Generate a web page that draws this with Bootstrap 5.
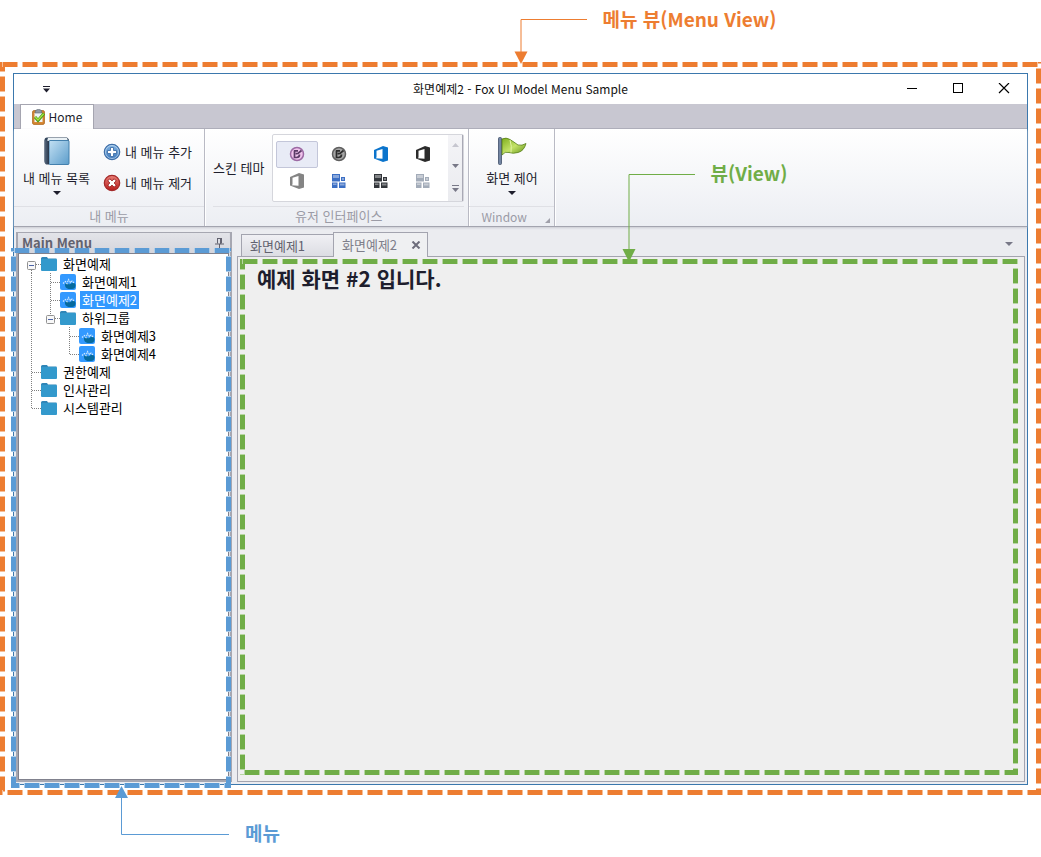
<!DOCTYPE html>
<html lang="ko">
<head>
<meta charset="utf-8">
<meta name="viewport" content="width=device-width, initial-scale=1">
<title>Fox UI Model Menu Sample</title>
<link href="https://cdn.jsdelivr.net/npm/bootstrap@5.3.0/dist/css/bootstrap.min.css" rel="stylesheet">
<style>
  body { font-family: "Noto Sans CJK KR", sans-serif; font-size: 13px; line-height: 18px; color: #1e1e2d; background: #fff; }
  button { font: inherit; color: inherit; border: 0; background: none; padding: 0; }
  svg { display: block; flex: none; }
  .page { min-height: 100vh; padding: 62px 0; }
  .frame { padding: 11px 13px 10px; }
  .latin { font-size: 12px; }

  /* dashed marker frames */
  .dash-frame { position: absolute; inset: 0; pointer-events: none; z-index: 3;
    --h: linear-gradient(90deg, var(--soft) 1px, var(--c) 1px 15px, var(--soft) 15px 16px, transparent 16px);
    --v: linear-gradient(var(--soft) 1px, var(--c) 1px 15px, var(--soft) 15px 16px, transparent 16px);
    background: var(--h) var(--t) 0 / 20px 5px repeat-x, var(--h) var(--b) 100% / 20px 5px repeat-x,
                var(--v) 0 var(--l) / 5px 20px repeat-y, var(--v) 100% var(--r) / 5px 20px repeat-y; }
  .dash-orange { --c: #ed7d31; --soft: #f6be98; --t: 2px; --b: 7px; --l: 14px; --r: 6px; }
  .dash-blue { --c: #5b9bd5; --soft: #adcdea; --t: 3px; --b: 13px; --l: 8px; --r: 8px; inset: 15px -1px -8px -7px; }
  .dash-green { --c: #70ad47; --soft: #b7d6a3; --t: 2px; --b: 4px; --l: 15px; --r: 9px; inset: 2px 6px 6px 2px; }
  .callout { position: absolute; z-index: 4; font-size: 19px; line-height: 24px; font-weight: 700; white-space: nowrap; }
  .callout-orange { color: #ed7d31; top: 7px; left: calc(50% - 7px); }
  .callout-green { color: #70ad47; top: 161px; left: calc(60% - 3px); }
  .callout-blue { color: #5b9bd5; bottom: 12px; left: 115px; }

  .win { border: 1px solid #3b78ad; background: #ebecf0; }
  .titlebar { height: 30px; background: #fff; color: #111; }
  .quick { position: absolute; left: 28px; }
  .win-btns { position: absolute; right: 17px; gap: 34px; }
  .strip { height: 25px; background: #c8c7d1; border-bottom: 1px solid #adadb8; padding-left: 6px; }
  .ribbon-tab { height: 25px; width: 74px; background: #fff; border: 1px solid #a5a5b0; border-bottom: 0; gap: 3px; }
  .ribbon { height: 98px; background: linear-gradient(#fff, #eceef3); border-bottom: 1px solid #a3a4af; box-shadow: 0 1px 2px #c9cad2; position: relative; }
  .group { border-right: 1px solid #b9bac4; box-shadow: 1px 0 #fff; }
  .group-mine { width: 191px; }
  .group-body { height: 77px; }
  .group-cap { height: 20px; color: #9b9ba6; border-top: 1px solid #dfe0e5; }
  .big-btn { width: 85px; }
  .mini-btns { padding: 14px 0 0 4px; gap: 13px; }
  .caret { width: 0; height: 0; border: 4px solid transparent; border-top-color: #1e1e2d; border-bottom: 0; }
  .caret.dim { border-top-color: #787887; }
  .gallery { width: 192px; height: 68px; background: #fff; border: 1px solid #d5d6dc; border-radius: 2px; padding-left: 3px; }
  .swatches { display: grid; grid-template-columns: repeat(4, 42px); grid-template-rows: 27px 27px; align-content: center; }
  .swatches button { display: flex; align-items: center; justify-content: center; border: 1px solid transparent; border-radius: 2px; }
  .swatches button.on { background: #e8ebf6; border-color: #c3c6d9; }
  .scroller { width: 15px; background: linear-gradient(#f4f4f7, #eaebef); border-right: 1px solid #a9a9b5; }

  .work { padding: 5px 2px 2px; gap: 5px; }
  .side { width: 216px; border: 2px solid #a6a7b1; border-top-width: 1px; background: #dcdde3; padding: 0 1px 0 0; }
  .side-head { height: 20px; color: #62626f; background: linear-gradient(#e3e4e9, #d4d5dc); padding: 0 5px 0 4px; }
  .tree { background: #fff; border: 1px solid #80818d; color: #000; padding: 1px 0 0 3px; margin: 0; }
  .tree li { height: 18px; display: flex; align-items: center; }
  .tree span { margin-left: 4px; padding: 0 2px; line-height: 18px; }
  .tree .sel { background: #3399ff; color: #fff; }
  .tabs { height: 24px; padding-left: 4px; }
  .doc-tab { height: 22px; width: 92px; background: linear-gradient(#f0f0f4, #dcdde3); border: 1px solid #a3a4af; border-width: 1px 0 0 1px; color: #62626f; padding: 0 8px; }
  .doc-tab.on { height: 25px; width: 95px; background: #eff0f2; border-right-width: 1px; color: #7e7e8a; margin-bottom: -1px; position: relative; z-index: 1; padding-right: 6px; }
  .view { background: #efefef; border: 1px solid #a3a4af; padding: 6px 19px; }
  .view h1 { font-size: 21px; line-height: 30px; font-weight: 700; margin: 0; }
</style>
</head>
<body>
<svg width="0" height="0" class="position-absolute" aria-hidden="true">
  <defs>
    <linearGradient id="gBook" x2="1" y2="1"><stop stop-color="#c3e0f3"/><stop offset="1" stop-color="#5c9dcb"/></linearGradient>
    <linearGradient id="gSpine" x2="1"><stop stop-color="#5b6b80"/><stop offset="1" stop-color="#26364b"/></linearGradient>
    <linearGradient id="gFlag" x2="1" y2="1"><stop stop-color="#7fae1e"/><stop offset=".5" stop-color="#c3e267"/><stop offset="1" stop-color="#5b8c14"/></linearGradient>
    <linearGradient id="gBlue" y2="1" x2="0"><stop stop-color="#86b8e6"/><stop offset="1" stop-color="#3873b8"/></linearGradient>
    <linearGradient id="gRed" y2="1" x2="0"><stop stop-color="#ea8078"/><stop offset="1" stop-color="#b81c1c"/></linearGradient>
    <symbol id="folder" viewBox="0 0 16 16"><path d="M0 2.500Q0 1 1.500 1H6l1 1.500H15.500V4H0Z" fill="#2f86b8"/><rect y="3" width="16" height="12" rx="1" fill="#3399cc"/></symbol>
    <symbol id="form" viewBox="0 0 16 16"><rect width="16" height="16" rx="2" fill="#3399ff"/><path d="M5 10Q7 8.500 9 10.500L13 8.500Q16 9.500 15.500 12 15 15 12 15H8.500Q4.500 14 5 10Z" fill="#066a9e"/><path d="M3 9.500L5.500 7.500L7 9.500L8.500 5.500L10.500 8.500L12 7L14 9" fill="none" stroke="#cfe8ff" stroke-width="1.200" stroke-dasharray="1.600 .8"/></symbol>
    <symbol id="pipe" viewBox="0 0 19 18"><path d="M9.500 0V18" stroke="#808080" stroke-dasharray="1"/></symbol>
    <symbol id="tee" viewBox="0 0 19 18"><path d="M9.500 0V18M10 9.500H19" stroke="#808080" stroke-dasharray="1"/></symbol>
    <symbol id="elbow" viewBox="0 0 19 18"><path d="M9.500 0V10M10 9.500H19" stroke="#808080" stroke-dasharray="1"/></symbol>
    <symbol id="minus" viewBox="0 0 19 18"><path d="M14 9.500H19" stroke="#808080" stroke-dasharray="1"/><rect x="5.500" y="6.500" width="8" height="8" rx="1" fill="#f8f8f8" stroke="#919191"/><path d="M7 10.500H12" stroke="#4b63a7"/></symbol>
    <symbol id="office" viewBox="0 0 16 16"><path fill-rule="evenodd" d="M1 4L10 0L15 1.500V14.500L10 16L1 12.500ZM3.500 4.800V11.500L2.500 12.200L9.500 12.800V3Z" fill="currentColor"/></symbol>
    <symbol id="tiles" viewBox="0 0 14 14"><path d="M0 0H8V7.500H0ZM9 3H13V7H9ZM0 8.500H5.500V14H0ZM7 8.500H13.500V14H7Z" fill="currentColor"/><path d="M1 1H7V4H1ZM10 4H12V6H10ZM1 9.500H4.500V11H1ZM8 9.500H12.500V11.500H8Z" fill="#fff" opacity=".4"/></symbol>
    <symbol id="disc" viewBox="0 0 16 16"><circle cx="8" cy="8" r="6.500" fill="var(--f)" stroke="currentColor" stroke-width="1.500"/><path d="M5.500 4.500V11.500H7.500Q10.500 11.500 10.500 8.500M5 4.800H9M7.500 8.500V7.500H9L12.500 4.500" fill="none" stroke="var(--k)" stroke-width="1.700"/></symbol>
  </defs>
</svg>

<main class="page d-flex flex-column position-relative">
  <div class="callout callout-orange d-flex">
    <svg class="me-3" width="73" height="57" viewBox="0 0 73 57"><path d="M7 46V12.500H73" fill="none" stroke="#ed7d31"/><path d="M.5 44.500H13.500L7 57Z" fill="#ed7d31"/></svg>
    <div>메뉴 뷰(Menu View)</div>
  </div>
  <div class="callout callout-green d-flex">
    <svg class="me-3" width="73" height="101" viewBox="0 0 73 101"><path d="M7 90V13.500H73" fill="none" stroke="#70ad47"/><path d="M.5 88H13.500L7 101Z" fill="#70ad47"/></svg>
    <div>뷰(View)</div>
  </div>
  <div class="callout callout-blue d-flex align-items-end">
    <svg class="me-3" width="114" height="59" viewBox="0 0 114 59"><path d="M6.500 10V48.500H114" fill="none" stroke="#5b9bd5"/><path d="M0 12H13L6.500 0Z" fill="#5b9bd5"/></svg>
    <div>메뉴</div>
  </div>

  <div class="frame position-relative flex-grow-1 d-flex flex-column">
    <div class="dash-frame dash-orange"></div>
    <section class="win flex-grow-1 d-flex flex-column">
      <header class="titlebar d-flex align-items-center justify-content-center position-relative">
        <button class="quick" aria-label="빠른 실행"><svg width="9" height="7"><path d="M1 .5H8" stroke="#1e1e2d"/><path d="M1 2.500H8L4.500 6.500Z" fill="#1e1e2d"/></svg></button>
        <div class="latin">화면예제2 - Fox UI Model Menu Sample</div>
        <div class="win-btns d-flex">
          <button aria-label="최소화"><svg width="12" height="12"><path d="M1 5.500H11" stroke="#000"/></svg></button>
          <button aria-label="최대화"><svg width="12" height="12"><rect x="1.500" y=".5" width="9" height="9" fill="none" stroke="#000"/></svg></button>
          <button aria-label="닫기"><svg width="12" height="12"><path d="M1 0L11 10M11 0L1 10" stroke="#000" stroke-width="1.200"/></svg></button>
        </div>
      </header>
      <nav class="strip">
        <button class="ribbon-tab latin d-flex align-items-center justify-content-center">
          <svg width="14" height="16" viewBox="0 0 14 16"><rect x=".7" y="1.700" width="11.600" height="13.600" rx="1" fill="#d98a35" stroke="#b06a20"/><path d="M2.500 4H10.500V13H2.500Z" fill="#eef3f6"/><path d="M3.500 1.500Q6.500-1 9.500 1.500L10 4H3Z" fill="#9199a3" stroke="#5d6672" stroke-width=".6"/><path d="M3 8L6 11.500 12 4.500" fill="none" stroke="#4c9a12" stroke-width="3"/><path d="M3.200 8L6 11 11.700 4.700" fill="none" stroke="#a5e445" stroke-width="1.300"/></svg>
          Home
        </button>
      </nav>
      <div class="ribbon d-flex">
        <div class="group group-mine">
          <div class="group-body d-flex">
            <button class="big-btn d-flex flex-column align-items-center pt-2">
              <svg width="26" height="28" viewBox="0 0 26 28"><path d="M3 .5H23l2 2V27H3Q.5 27 .5 24V3Q.5.5 3 .5Z" fill="#33465c"/><path d="M4 1H23L24 4H3Z" fill="#eaf1f5"/><rect x="5" y="3.500" width="20" height="24" rx="1" fill="url(#gBook)" stroke="#4480ad"/><path d="M.5 3L5 4V27.500H2Q.5 27 .5 24Z" fill="url(#gSpine)"/></svg>
              <span class="pt-1">내 메뉴 목록</span><span class="caret mt-1"></span>
            </button>
            <div class="mini-btns d-flex flex-column">
              <button class="d-flex align-items-center gap-1">
                <svg width="18" height="18" viewBox="0 0 18 18"><circle cx="9" cy="9" r="7.700" fill="url(#gBlue)" stroke="#3f6fa8" stroke-width="1.200"/><circle cx="9" cy="9" r="6.500" fill="none" stroke="#c9def1" stroke-width=".7"/><path d="M7.500 4.500h3v3h3v3h-3v3h-3v-3h-3v-3h3Z" fill="#fff" stroke="#3565a0" stroke-width=".8"/></svg>
                내 메뉴 추가
              </button>
              <button class="d-flex align-items-center gap-1">
                <svg width="18" height="18" viewBox="0 0 18 18"><circle cx="9" cy="9" r="7.700" fill="url(#gRed)" stroke="#a32a2a" stroke-width="1.200"/><path d="M7.500 4.500h3v3h3v3h-3v3h-3v-3h-3v-3h3Z" transform="rotate(45 9 9)" fill="#fff" stroke="#8f1414" stroke-width=".8"/></svg>
                내 메뉴 제거
              </button>
            </div>
          </div>
          <div class="group-cap text-center">내 메뉴</div>
        </div>
        <div class="group ps-2 pe-1">
          <div class="group-body d-flex align-items-center gap-2">
            <span>스킨 테마</span>
            <div class="gallery d-flex justify-content-between">
              <div class="swatches">
                <button class="on" aria-label="스킨 1"><svg width="16" height="16" style="--f:#f0c3ec;--k:#5a3a66" color="#9c6aa4"><use href="#disc"/></svg></button>
                <button aria-label="스킨 2"><svg width="16" height="16" style="--f:#a5a5a5;--k:#2c2c2c" color="#5f5f5f"><use href="#disc"/></svg></button>
                <button aria-label="스킨 3"><svg width="16" height="16" color="#0b74cc"><use href="#office"/></svg></button>
                <button aria-label="스킨 4"><svg width="16" height="16" color="#2b2b2b"><use href="#office"/></svg></button>
                <button aria-label="스킨 5"><svg width="16" height="16" color="#848484"><use href="#office"/></svg></button>
                <button aria-label="스킨 6"><svg width="14" height="14" color="#3c6fc4"><use href="#tiles"/></svg></button>
                <button aria-label="스킨 7"><svg width="14" height="14" color="#33363b"><use href="#tiles"/></svg></button>
                <button aria-label="스킨 8"><svg width="14" height="14" color="#a3acb9"><use href="#tiles"/></svg></button>
              </div>
              <div class="scroller d-flex flex-column align-items-center justify-content-around">
                <button aria-label="위로"><svg width="7" height="4"><path d="M0 4H7L3.500 0Z" fill="#c6c6cf"/></svg></button>
                <button aria-label="아래로"><svg width="7" height="4"><path d="M0 0H7L3.500 4Z" fill="#787887"/></svg></button>
                <button aria-label="펼치기"><svg width="7" height="7"><path d="M0 .5H7" stroke="#787887"/><path d="M0 3H7L3.500 7Z" fill="#787887"/></svg></button>
              </div>
            </div>
          </div>
          <div class="group-cap text-center">유저 인터페이스</div>
        </div>
        <div class="group">
          <div class="group-body">
            <button class="big-btn d-flex flex-column align-items-center pt-2">
              <svg width="30" height="28" viewBox="0 0 30 28"><rect x="1.500" y=".5" width="3" height="27" rx="1" fill="#7385a3" stroke="#3f4e68" stroke-width=".8"/><path d="M5 2Q9 0 13 2.500T21 8Q25 9 29 6.500 27 14 21 15.500 16 17 12 15.500T5 18Z" fill="url(#gFlag)" stroke="#567f17" stroke-width=".8"/><path d="M13 3Q15 9 14 15.500" stroke="#e2f3a4" fill="none"/></svg>
              <span class="pt-1">화면 제어</span><span class="caret mt-1"></span>
            </button>
          </div>
          <div class="group-cap latin d-flex justify-content-between align-items-center ps-2 pe-1"><span class="ps-1">Window</span><svg class="mt-2" width="5" height="5"><path d="M5 0V5H0Z" fill="#a0a0aa"/></svg></div>
        </div>
      </div>

      <div class="work flex-grow-1 d-flex">
        <aside class="side d-flex flex-column position-relative">
          <div class="side-head d-flex align-items-center justify-content-between fw-bold">Main Menu
            <button aria-label="고정"><svg width="9" height="10"><path d="M2.500 0V5.500M6.500 0V5.500M2 .5H7M5.500 0V6M0 6H9M4.500 6V10" stroke="#62626f" fill="none"/></svg></button>
          </div>
          <ul class="tree list-unstyled flex-grow-1">
            <li><svg width="19" height="18"><use href="#minus"/><path d="M9.500 15V18" stroke="#808080" stroke-dasharray="1"/></svg><svg width="16" height="16"><use href="#folder"/></svg><span>화면예제</span></li>
            <li><svg width="19" height="18"><use href="#pipe"/></svg><svg width="19" height="18"><use href="#tee"/></svg><svg width="16" height="16"><use href="#form"/></svg><span>화면예제1</span></li>
            <li><svg width="19" height="18"><use href="#pipe"/></svg><svg width="19" height="18"><use href="#tee"/></svg><svg width="16" height="16"><use href="#form"/></svg><span class="sel">화면예제2</span></li>
            <li><svg width="19" height="18"><use href="#pipe"/></svg><svg width="19" height="18"><use href="#elbow"/><use href="#minus"/></svg><svg width="16" height="16"><use href="#folder"/></svg><span>하위그룹</span></li>
            <li><svg width="19" height="18"><use href="#pipe"/></svg><svg width="19" height="18"></svg><svg width="19" height="18"><use href="#tee"/></svg><svg width="16" height="16"><use href="#form"/></svg><span>화면예제3</span></li>
            <li><svg width="19" height="18"><use href="#pipe"/></svg><svg width="19" height="18"></svg><svg width="19" height="18"><use href="#elbow"/></svg><svg width="16" height="16"><use href="#form"/></svg><span>화면예제4</span></li>
            <li><svg width="19" height="18"><use href="#tee"/></svg><svg width="16" height="16"><use href="#folder"/></svg><span>권한예제</span></li>
            <li><svg width="19" height="18"><use href="#tee"/></svg><svg width="16" height="16"><use href="#folder"/></svg><span>인사관리</span></li>
            <li><svg width="19" height="18"><use href="#elbow"/></svg><svg width="16" height="16"><use href="#folder"/></svg><span>시스템관리</span></li>
          </ul>
          <div class="dash-frame dash-blue"></div>
        </aside>
        <div class="flex-grow-1 d-flex flex-column">
          <div class="tabs d-flex align-items-end">
            <button class="doc-tab text-start">화면예제1</button>
            <div class="doc-tab on d-flex align-items-center justify-content-between">화면예제2
              <button aria-label="탭 닫기"><svg width="10" height="8"><path d="M1.500 .5L8.500 7.500M8.500 .5L1.500 7.500" stroke="#6d6d7b" stroke-width="2"/></svg></button>
            </div>
            <button class="ms-auto align-self-center me-2 pe-1" aria-label="탭 목록"><span class="caret dim d-block"></span></button>
          </div>
          <div class="view flex-grow-1 position-relative">
            <h1>예제 화면 #2 입니다.</h1>
            <div class="dash-frame dash-green"></div>
          </div>
        </div>
      </div>
    </section>
  </div>
</main>
<script src="https://cdn.jsdelivr.net/npm/bootstrap@5.3.0/dist/js/bootstrap.bundle.min.js"></script>
</body>
</html>
